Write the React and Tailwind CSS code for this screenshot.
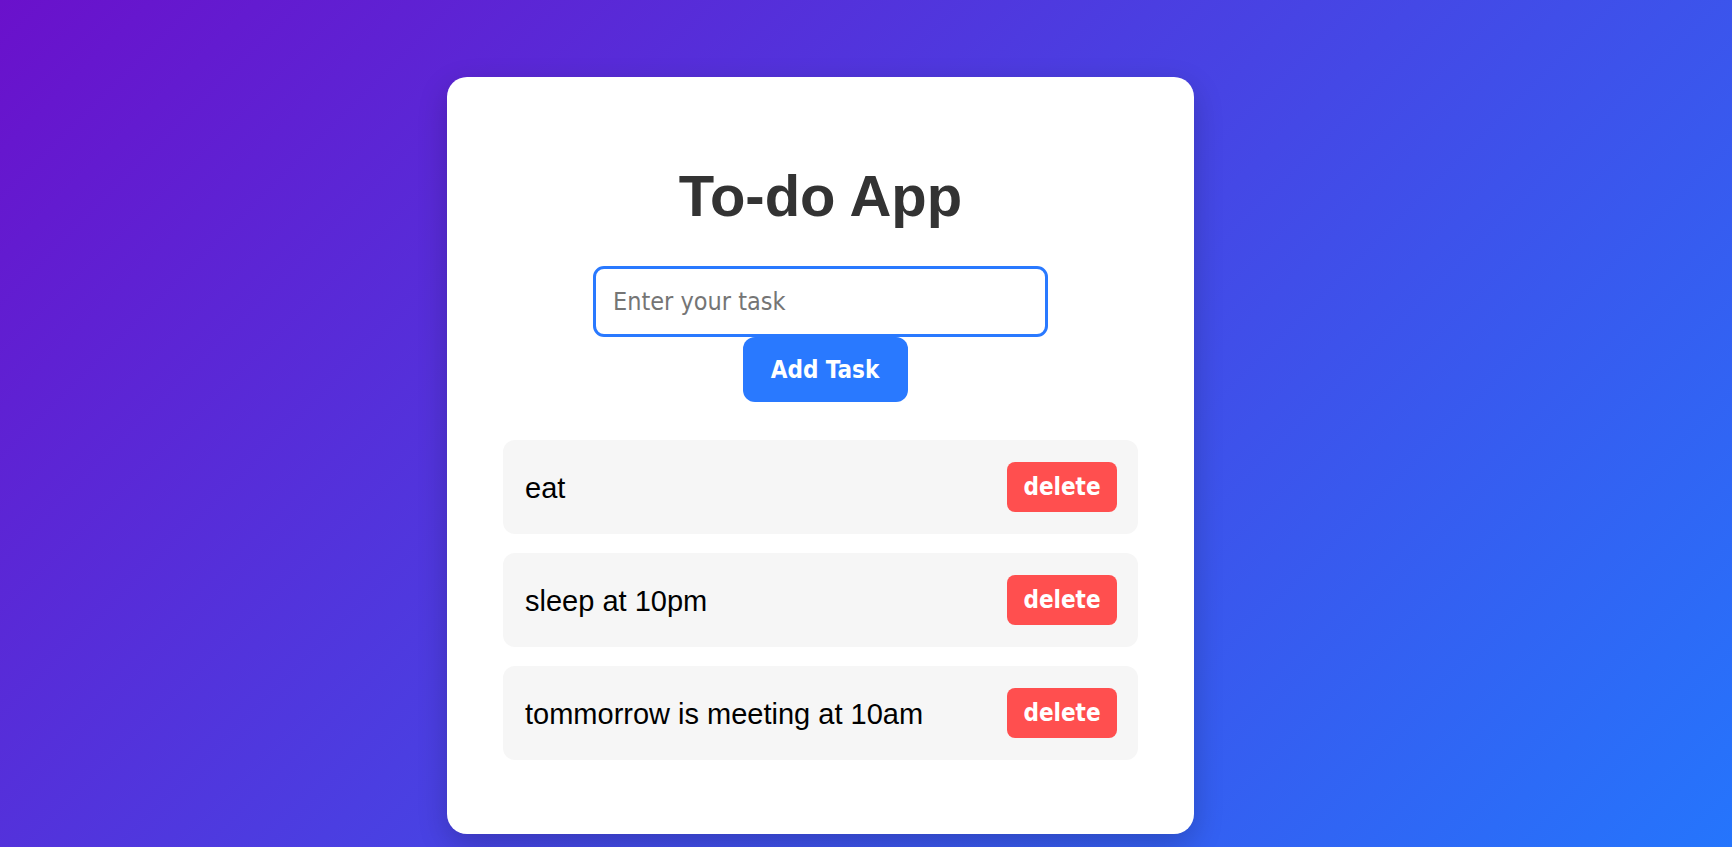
import { useState } from 'react'

const App = () => {
  const [tasks, setTasks] = useState(['eat', 'sleep at 10pm', 'tommorrow is meeting at 10am'])
  const [text, setText] = useState('')

  const addTask = () => {
    if (!text.trim()) return
    setTasks([...tasks, text.trim()])
    setText('')
  }

  return (
    <div className="min-h-screen bg-[linear-gradient(135deg,#6a11cb,#2575fc)] pt-[77px] pl-[447px] pb-[13px] font-['Liberation_Sans',Arial,sans-serif]">
      <div className="w-[747px] h-[757px] bg-white rounded-[20px] shadow-[0_10px_30px_rgba(0,0,0,0.2)] px-[56px] pt-[86px]">
        <h1 className="text-center text-[58px] leading-[65px] font-bold text-[#333]">To-do App</h1>

        <div className="flex flex-col items-center mt-[38px]">
          <input
            value={text}
            onChange={(e) => setText(e.target.value)}
            placeholder="Enter your task"
            className="w-[455px] h-[71px] border-[3px] border-[#2979ff] rounded-[11px] px-[17px] text-[25px] text-[#333] placeholder:text-[#757575] outline-none font-['DejaVu_Sans_Condensed','DejaVu_Sans',sans-serif]"
          />
          <button
            onClick={addTask}
            className="ml-[9px] w-[165px] h-[65px] bg-[#2979ff] text-white rounded-[12px] text-[24px] font-bold font-['DejaVu_Sans_Condensed','DejaVu_Sans',sans-serif]"
          >
            Add Task
          </button>
        </div>

        <ul className="mt-[38px] flex flex-col gap-[19px]">
          {tasks.map((task, i) => (
            <li key={i} className="flex items-center justify-between bg-[#f6f6f6] rounded-[12px] pl-[22px] pr-[21px] py-[22px]">
              <span className="text-[29px] text-black pt-[3px]">{task}</span>
              <button
                onClick={() => setTasks(tasks.filter((_, j) => j !== i))}
                className="w-[110px] h-[50px] bg-[#ff4f4f] text-white rounded-[8px] text-[24px] font-bold font-['DejaVu_Sans_Condensed','DejaVu_Sans',sans-serif]"
              >
                delete
              </button>
            </li>
          ))}
        </ul>
      </div>
    </div>
  )
}

export default App
